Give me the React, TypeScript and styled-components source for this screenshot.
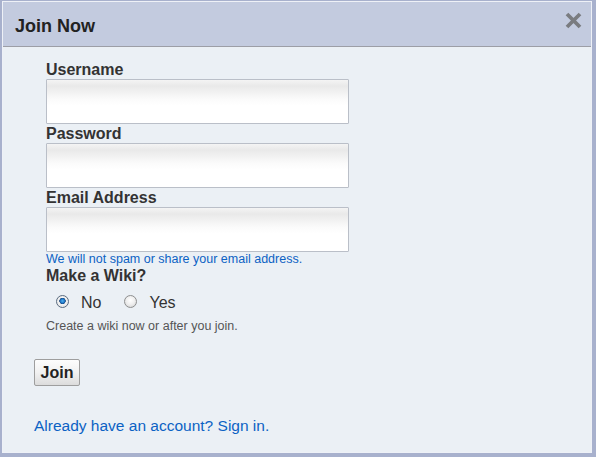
import React, { useState } from 'react';
import styled, { createGlobalStyle } from 'styled-components';

const GlobalStyle = createGlobalStyle`
  html, body {
    margin: 0;
    padding: 0;
    background: #a8b1cd;
    font-family: "Liberation Sans", Arial, sans-serif;
  }
`;

const Page = styled.div`
  box-sizing: border-box;
  width: 596px;
  height: 457px;
  padding: 1px 4px 4px 2px;
`;

const Dialog = styled.div`
  box-sizing: border-box;
  height: 100%;
  display: flex;
  flex-direction: column;
  border: 1px solid #eef1f7;
  background: #ebf0f5;
`;

const Header = styled.div`
  box-sizing: border-box;
  height: 45px;
  display: flex;
  justify-content: space-between;
  align-items: flex-start;
  padding: 13px 9px 0 12px;
  background: #c3cbdf;
  border-bottom: 1px solid #9c9ea6;
`;

const Title = styled.h1`
  margin: 0;
  font-size: 18px;
  line-height: 22px;
  font-weight: bold;
  color: #222;
`;

const CloseButton = styled.button`
  margin: -3px 0 0;
  padding: 0;
  border: none;
  background: none;
  width: 17px;
  height: 17px;
  cursor: pointer;
  display: flex;
`;

const Body = styled.div`
  display: flex;
  flex-direction: column;
  align-items: flex-start;
  padding: 13px 0 0 31px;
`;

const Fields = styled.div`
  display: flex;
  flex-direction: column;
  align-items: flex-start;
  margin-left: 12px;
`;

const Label = styled.label`
  display: block;
  padding-top: 1px;
  font-size: 16px;
  line-height: 18px;
  font-weight: bold;
  color: #333;
`;

const TextInput = styled.input`
  box-sizing: border-box;
  width: 303px;
  height: 45px;
  margin: 0;
  padding: 4px 6px;
  border: 1px solid #babfc8;
  border-radius: 1px;
  font-family: inherit;
  font-size: 16px;
  background: linear-gradient(to bottom, #f4f4f4 0%, #e9e9e9 14%, #fbfbfb 45%, #fff 60%);
  outline: none;
`;

const Hint = styled.div<{ $tone: 'blue' | 'gray' }>`
  margin-top: ${p => (p.$tone === 'blue' ? '0' : '7px')};
  font-size: 12.5px;
  line-height: 14px;
  color: ${p => (p.$tone === 'blue' ? '#0b62c4' : '#555')};
`;

const RadioRow = styled.div`
  display: flex;
  align-items: center;
  margin: 9px 0 0 10px;
  height: 18px;
`;

const RadioOption = styled.label`
  display: flex;
  align-items: center;
  gap: 12px;
  margin-right: 23px;
  font-size: 16px;
  line-height: 18px;
  color: #333;
  cursor: pointer;
`;

const Radio = styled.input`
  appearance: none;
  box-sizing: border-box;
  width: 13px;
  height: 13px;
  margin: -4px 0 0;
  border-radius: 50%;
  border: 1px solid #8e8f8f;
  background: radial-gradient(circle at 50% 40%, #fff 0%, #f0f0f0 45%, #cfcfcf 100%);

  &:checked {
    border-color: #5a6c80;
    background: radial-gradient(circle at 50% 45%, #4fb3f0 0%, #1a6ec0 28%, #17457a 36%, #f4f4f4 42%, #dadada 100%);
  }
`;

const JoinButton = styled.button`
  box-sizing: border-box;
  width: 46px;
  height: 27px;
  margin-top: 26px;
  padding: 0;
  border: 1px solid #9e9e9e;
  border-radius: 2px;
  background: linear-gradient(to bottom, #fdfdfd 0%, #f1f1f1 50%, #dcdcdc 100%);
  font-family: inherit;
  font-size: 16px;
  font-weight: bold;
  color: #222;
  cursor: pointer;
`;

const SignIn = styled.a`
  margin-top: 31px;
  font-size: 15.5px;
  line-height: 18px;
  color: #0b62c4;
  text-decoration: none;
  cursor: pointer;
`;

const CloseIcon = () => (
  <svg width="17" height="17" viewBox="0 0 17 17">
    <path d="M2 2 L15 15 M15 2 L2 15" stroke="#7a7c80" strokeWidth="3.8" strokeLinecap="butt" />
  </svg>
);

export default function App() {
  const [wiki, setWiki] = useState<'no' | 'yes'>('no');

  return (
    <Page>
      <GlobalStyle />
      <Dialog>
        <Header>
          <Title>Join Now</Title>
          <CloseButton aria-label="Close">
            <CloseIcon />
          </CloseButton>
        </Header>
        <Body>
          <Fields>
            <Label htmlFor="username">Username</Label>
            <TextInput id="username" type="text" />
            <Label htmlFor="password">Password</Label>
            <TextInput id="password" type="password" />
            <Label htmlFor="email">Email Address</Label>
            <TextInput id="email" type="email" />
            <Hint $tone="blue">We will not spam or share your email address.</Hint>
            <Label as="div">Make a Wiki?</Label>
            <RadioRow>
              <RadioOption>
                <Radio type="radio" name="wiki" checked={wiki === 'no'} onChange={() => setWiki('no')} />
                No
              </RadioOption>
              <RadioOption>
                <Radio type="radio" name="wiki" checked={wiki === 'yes'} onChange={() => setWiki('yes')} />
                Yes
              </RadioOption>
            </RadioRow>
            <Hint $tone="gray">Create a wiki now or after you join.</Hint>
          </Fields>
          <JoinButton>Join</JoinButton>
          <SignIn>Already have an account? Sign in.</SignIn>
        </Body>
      </Dialog>
    </Page>
  );
}
